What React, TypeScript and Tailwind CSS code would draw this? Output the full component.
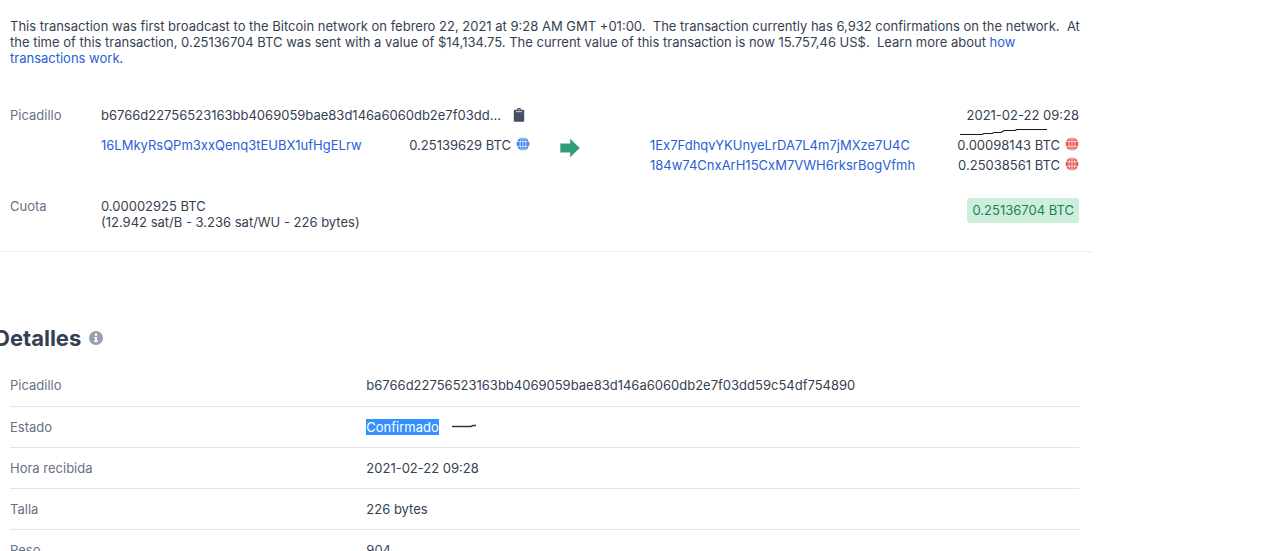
import React from "react";

const details = [
  { label: "Picadillo", value: "b6766d22756523163bb4069059bae83d146a6060db2e7f03dd59c54df754890" },
  { label: "Estado", value: "Confirmado", selected: true },
  { label: "Hora recibida", value: "2021-02-22 09:28" },
  { label: "Talla", value: "226 bytes" },
  { label: "Peso", value: "904" },
];

const outputs = [
  { address: "1Ex7FdhqvYKUnyeLrDA7L4m7jMXze7U4C", amount: "0.00098143 BTC" },
  { address: "184w74CnxArH15CxM7VWH6rksrBogVfmh", amount: "0.25038561 BTC" },
];

function Globe({ className }: { className: string }) {
  return (
    <svg viewBox="0 0 14 14" className={`h-[14px] w-[14px] shrink-0 ${className}`} aria-hidden="true">
      <circle cx="7" cy="7" r="6.4" fill="currentColor" />
      <g fill="none" stroke="#fff" strokeOpacity="0.75" strokeWidth="0.9">
        <ellipse cx="7" cy="7" rx="3" ry="6.6" />
        <path d="M7 .5v13M.5 4.7h13M.5 9.3h13" />
      </g>
    </svg>
  );
}

function Clipboard() {
  return (
    <svg viewBox="0 0 12 14" className="h-[14px] w-3" aria-hidden="true">
      <path
        fill="#464f64"
        d="M1.8 1.7H4a2 2 0 0 1 4 0h2.2c.6 0 1 .4 1 1v10c0 .6-.4 1-1 1H1.8c-.6 0-1-.4-1-1v-10c0-.6.4-1 1-1z"
      />
      <path fill="#b9bfcb" d="M3 3h6v1.2H3z" />
      <circle cx="6" cy="1.7" r=".6" fill="#fff" />
    </svg>
  );
}

function Arrow() {
  return (
    <svg viewBox="0 0 20 20" className="h-5 w-5" aria-hidden="true">
      <path fill="#329f7b" d="M.3 5.5h9.8V.8L19.8 10l-9.7 9.2v-4.7H.3z" />
    </svg>
  );
}

function Info() {
  return (
    <svg viewBox="0 0 14 14" className="h-[14px] w-[14px]" aria-hidden="true">
      <circle cx="7" cy="7" r="7" fill="#989fb0" />
      <circle cx="7" cy="3.8" r="1.3" fill="#fff" />
      <path fill="#fff" d="M5.1 5.9h2.8v3.6h1v1.4H5.1V9.5h1V7.3h-1z" />
    </svg>
  );
}

export default function App() {
  return (
    <main className="h-screen overflow-hidden bg-white font-['Inter',sans-serif] text-[13px] leading-4 text-[#353f52]">
      <div className="max-w-[1093px]">
        <section className="border-b border-[#eeeff1] pt-[18px] pr-[14px] pb-[21px] pl-[10px]">
          <p className="-mr-2">
            This transaction was first broadcast to the Bitcoin network on febrero 22, 2021 at 9:28 AM GMT +01:00.&nbsp;
            The transaction currently has 6,932 confirmations on the network.&nbsp; At the time of this transaction,
            0.25136704 BTC was sent with a value of $14,134.75. The current value of this transaction is now 15.757,46
            US$.&nbsp; Learn more about{" "}
            <a href="#how" className="text-[#2a60d4]">
              how <br />
              transactions work
            </a>
            .
          </p>

          <div className="mt-[41px] grid grid-cols-[91px_1fr_auto]">
            <span className="text-[#677184]">Picadillo</span>
            <div className="flex items-center gap-3">
              <span>b6766d22756523163bb4069059bae83d146a6060db2e7f03dd...</span>
              <button type="button" aria-label="Copiar">
                <Clipboard />
              </button>
            </div>
            <time className="relative">
              2021-02-22 09:28
              <svg viewBox="0 0 90 8" className="absolute top-[21px] -left-[7px] h-2 w-[90px]" aria-hidden="true">
                <path
                  d="M0 6.5h22L24 5.5h8l2-1h7l3-2h11l2-1h30"
                  fill="none"
                  stroke="#15171a"
                  strokeWidth="1.2"
                />
              </svg>
            </time>
          </div>

          <div className="mt-3 grid grid-cols-[429px_120px_1fr] pl-[91px] leading-5">
            <div className="flex items-start justify-between">
              <a href="#input" className="text-[#2a60d4]">
                16LMkyRsQPm3xxQenq3tEUBX1ufHgELrw
              </a>
              <span className="flex gap-[5px]">
                0.25139629 BTC <Globe className="mt-[2px] text-[#3f83ef]" />
              </span>
            </div>
            <div className="flex items-start pt-[3px] pl-[30px]">
              <Arrow />
            </div>
            <ul>
              {outputs.map((o) => (
                <li key={o.address} className="flex justify-between">
                  <a href="#output" className="text-[#2a60d4]">
                    {o.address}
                  </a>
                  <span className="flex gap-[5px]">
                    {o.amount} <Globe className="mt-[2px] text-[#e2574f]" />
                  </span>
                </li>
              ))}
            </ul>
          </div>

          <div className="mt-[23px] grid grid-cols-[91px_1fr_auto]">
            <span className="text-[#677184]">Cuota</span>
            <div>
              <p>0.00002925 BTC</p>
              <p>(12.942 sat/B - 3.236 sat/WU - 226 bytes)</p>
            </div>
            <span className="h-[25px] rounded-[3px] bg-[#cdeeda] px-[5px] leading-[25px] text-[#20825c]">
              0.25136704 BTC
            </span>
          </div>
        </section>

        <section className="pt-[70px] pr-[14px] pl-[10px]">
          <h2 className="-ml-4 flex items-center gap-2 text-[22px] leading-8 font-bold text-[#353f52]">
            Detalles <Info />
          </h2>
          <table className="mt-[11px] w-full border-collapse text-left">
            <tbody>
              {details.map((d) => (
                <tr key={d.label} className="h-[41px] border-b border-[#e2e4e8]">
                  <th scope="row" className="w-1/3 font-normal text-[#677184]">
                    {d.label}
                  </th>
                  <td>
                    {d.selected ? (
                      <span className="flex items-center gap-[13px]">
                        <mark className="bg-[#3390ff] text-white">{d.value}</mark>
                        <svg viewBox="0 0 24 6" className="h-[6px] w-6" aria-hidden="true">
                          <path d="M0 2.5h19l2-1h3" fill="none" stroke="#33363b" strokeWidth="1.4" />
                        </svg>
                      </span>
                    ) : (
                      d.value
                    )}
                  </td>
                </tr>
              ))}
            </tbody>
          </table>
        </section>
      </div>
    </main>
  );
}
